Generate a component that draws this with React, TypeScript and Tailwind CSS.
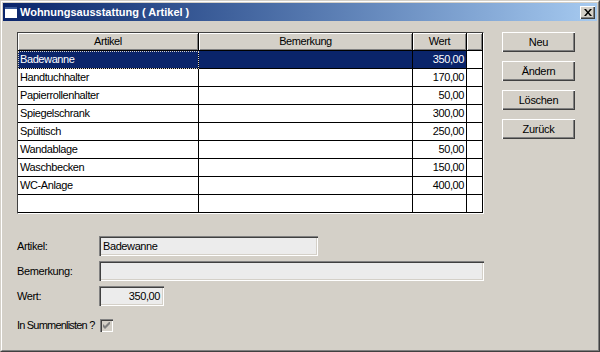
import React from 'react';

interface Item { name: string; note: string; value: string }

const items: Item[] = [
  { name: 'Badewanne', note: '', value: '350,00' },
  { name: 'Handtuchhalter', note: '', value: '170,00' },
  { name: 'Papierrollenhalter', note: '', value: '50,00' },
  { name: 'Spiegelschrank', note: '', value: '300,00' },
  { name: 'Spültisch', note: '', value: '250,00' },
  { name: 'Wandablage', note: '', value: '50,00' },
  { name: 'Waschbecken', note: '', value: '150,00' },
  { name: 'WC-Anlage', note: '', value: '400,00' },
  { name: '', note: '', value: '' },
];

const raised = 'shadow-[inset_1px_1px_0_#ffffff,inset_-1px_-1px_0_#404040,inset_-2px_-2px_0_#808080]';
const headerCell = 'shadow-[inset_1px_1px_0_#ffffff,inset_-1px_-1px_0_#808080]';
const sunken = 'shadow-[inset_1px_1px_0_#808080,inset_2px_2px_0_#404040,inset_-1px_-1px_0_#ffffff,inset_-2px_-2px_0_#d4d0c8]';

const Button: React.FC<{ label: string }> = ({ label }) => (
  <button className={`w-[73px] h-[20px] bg-[#d4d0c8] text-black text-[11px] tracking-[-0.3px] ${raised}`}>{label}</button>
);

const Field: React.FC<{ label: string; value: string; width: string; right?: boolean }> = ({ label, value, width, right }) => (
  <div className="flex items-center h-[20px]">
    <div className="w-[82px] shrink-0">{label}</div>
    <div className={`${width} h-[20px] bg-[#ececec] ${sunken} flex items-center px-[4px] ${right ? 'justify-end' : ''}`}>{value}</div>
  </div>
);

export default function App() {
  return (
    <div className="w-[600px] h-[352px] bg-[#d4d0c8] border border-t-[#d4d0c8] border-l-[#d4d0c8] border-r-[#404040] border-b-[#404040] text-[11px] text-black" style={{ fontFamily: '"Liberation Sans", Arial, sans-serif' }}>
      <div className="h-full border border-t-white border-l-white border-r-[#808080] border-b-[#808080] p-[1px] flex flex-col">
        {/* title bar */}
        <div className="h-[18px] flex items-center bg-gradient-to-r from-[#0a246a] to-[#a6caf0] pl-[2px] pr-[2px]">
          <div className="w-[12px] h-[11px] bg-white border-t-[2px] border-t-[#3a5a9a] mr-[3px]" />
          <span className="font-bold text-white text-[11px]">Wohnungsausstattung ( Artikel )</span>
          <div className="ml-auto w-[15px] h-[13px] bg-[#d4d0c8] shadow-[inset_1px_1px_0_#ffffff,inset_-1px_-1px_0_#404040,inset_-2px_-2px_0_#808080] flex items-center justify-center">
            <svg width="8" height="7" viewBox="0 0 8 7">
              <path d="M0 0h2l2 2.5L6 0h2L5 3.5 8 7H6L4 4.5 2 7H0l3-3.5z" fill="#000" />
            </svg>
          </div>
        </div>

        {/* body */}
        <div className="flex pl-[14px] pt-[11px]">
          <div className="flex flex-col">
            {/* table */}
            <div className="w-[467px] border border-t-[#404040] border-l-[#404040] border-r-white border-b-white tracking-[-0.4px]">
              <div className="flex h-[18px]">
                <div className={`w-[181px] border-r border-b border-black flex items-center justify-center bg-[#d4d0c8] ${headerCell}`}>Artikel</div>
                <div className={`w-[214px] border-r border-b border-black flex items-center justify-center bg-[#d4d0c8] ${headerCell}`}>Bemerkung</div>
                <div className={`w-[54px] border-r border-b border-black flex items-center justify-center bg-[#d4d0c8] ${headerCell}`}>Wert</div>
                <div className={`w-[16px] border-b border-r border-black bg-[#d4d0c8] ${headerCell}`} />
              </div>
              {items.map((it, i) => {
                const sel = i === 0;
                return (
                  <div key={i} className="flex h-[18px]">
                    <div className={`w-[181px] border-r border-b border-black flex items-center px-[2px] ${sel ? 'bg-[#0a246a] text-white outline-1 outline-dotted outline-[#d4d0c8] -outline-offset-1' : 'bg-white'}`}>{it.name}</div>
                    <div className={`w-[214px] border-r border-b border-black ${sel ? 'bg-[#0a246a]' : 'bg-white'}`}>{it.note}</div>
                    <div className={`w-[54px] border-r border-b border-black flex items-center justify-end px-[2px] ${sel ? 'bg-[#0a246a] text-white' : 'bg-white'}`}>{it.value}</div>
                    <div className="w-[16px] border-r border-b border-black bg-white" />
                  </div>
                );
              })}
            </div>

            {/* form */}
            <div className="mt-[22px] flex flex-col gap-[5px] tracking-[-0.4px]">
              <Field label="Artikel:" value="Badewanne" width="w-[219px]" />
              <Field label="Bemerkung:" value="" width="w-[385px]" />
              <Field label="Wert:" value="350,00" width="w-[65px]" right />
              <div className="flex items-center h-[20px] mt-[4px]">
                <div className="w-[83px] shrink-0 whitespace-nowrap tracking-[-0.8px]">In Summenlisten ?</div>
                <div className={`w-[13px] h-[13px] bg-[#d4d0c8] ${sunken} flex items-center justify-center`}>
                  <svg width="7" height="7" viewBox="0 0 7 7">
                    <path d="M0 2v3l2 2 5-5V-1L2 4z" fill="#808080" />
                  </svg>
                </div>
              </div>
            </div>
          </div>

          {/* buttons */}
          <div className="ml-[18px] flex flex-col gap-[9px]">
            <Button label="Neu" />
            <Button label="Ändern" />
            <Button label="Löschen" />
            <Button label="Zurück" />
          </div>
        </div>
      </div>
    </div>
  );
}
